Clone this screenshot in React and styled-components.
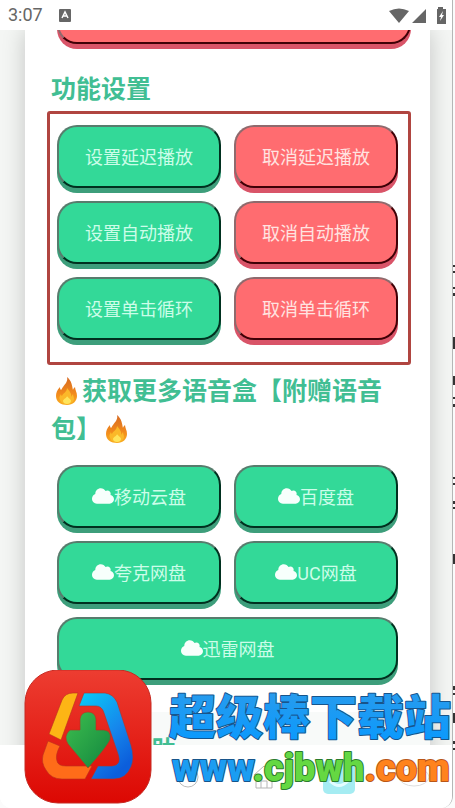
import React from 'react'
import styled, { createGlobalStyle } from 'styled-components';
import { FaCloud } from 'react-icons/fa';

const GlobalStyle = createGlobalStyle`
  * { box-sizing: border-box; }
  body {
    margin: 0;
    background: #fbfbfb;
    font-family: Roboto, "Noto Sans CJK SC", sans-serif;
  }
  h2, ul { margin: 0; padding: 0; }
`

const Page = styled.div`
  display: flex;
  height: 100vh;
  overflow: hidden;
  position: relative;
`

const Phone = styled.div`
  display: flex;
  flex-direction: column;
  flex: 1;
  min-width: 0;
  background: #fff;
  border-right: 1px solid #b5b7b6;
  border-radius: 0 0 12px 12px;
  overflow: hidden;
`

const Gutter = styled.div`
  flex: none;
  width: 2px;
  overflow: hidden;
  svg { display: block; }
`

const StatusBar = styled.header`
  display: flex;
  flex: none;
  align-items: center;
  height: 30px;
  padding: 0 5px 0 8px;
  color: #666;
  font-size: 18px;
  svg { display: block; }
`

const Clock = styled.span`
  margin-right: 16px;
  line-height: 30px;
`

const StatusIcons = styled.div`
  display: flex;
  align-items: center;
  margin-left: auto;
`

const Screen = styled.main`
  display: flex;
  flex-direction: column;
  flex: 1;
  min-height: 0;
  padding: 0 22px 0 25px;
  overflow: hidden;
  background: #f4f6f4;
`

const Card = styled.section`
  flex: 1 0 auto;
  padding: 0 19px 0 22px;
  background: #fff;
  box-shadow: 0 0 22px rgba(0, 0, 0, 0.2);
`

const Title = styled.h2`
  padding: 0 0 0 4px;
  color: #41be93;
  font-size: 25px;
  font-weight: 700;
  line-height: 38px;
  svg { vertical-align: -5px; margin: 0 4px; }
`

const Frame = styled.div`
  margin: 2px 0 8px;
  padding: 11px 10px 22px 7px;
  border: 3px solid #b04540;
  border-radius: 3px;
`

const Links = styled.div`
  padding: 16px 13px 0 10px;
`

const Grid = styled.div`
  display: grid;
  grid-template-columns: 1fr 1fr;
  gap: 13px;
`

const Button = styled.button`
  display: flex;
  flex: none;
  align-items: center;
  justify-content: center;
  grid-column: ${({ $wide }) => ($wide ? '1 / -1' : 'auto')};
  height: 63px;
  padding: 0 0 2px;
  border: 2px solid;
  border-color: ${({ $red }) => ($red ? '#8f6a6d #3f0006 #3f0006 #8f6a6d' : '#587c6d #00301f #00301f #587c6d')};
  border-radius: 20px;
  background: ${({ $red }) => ($red ? '#ff6c70' : '#33d998')};
  box-shadow: 0 5px 0 ${({ $red }) => ($red ? '#d95468' : '#3d9e7b')};
  color: ${({ $red }) => ($red ? '#ffe3e0' : '#ccfde9')};
  font-family: inherit;
  font-size: 18px;
  svg { color: #f7fffc; flex: none; }
`

const Cut = styled.div`
  display: flex;
  flex-direction: column;
  justify-content: flex-end;
  height: 14px;
  margin: 0 0 27px 10px;
`

const Help = styled(Title)`
  margin: 32px -19px 0 -22px;
  padding: 20px 0 0 26px;
  background: #f8faf9;
`

const NavBar = styled.nav`
  display: grid;
  grid-template-columns: repeat(6, 1fr);
  flex: none;
  place-items: center;
  height: 63px;
  background: #fff;
`

const NavButton = styled.button`
  display: flex;
  padding: 0;
  border: 0;
  background: none;
`

const Watermark = styled.aside`
  position: absolute;
  left: 24px;
  right: 0;
  bottom: 4px;
  display: flex;
  align-items: flex-start;
  svg { flex: none; display: block; }
`

const Brand = styled.svg`
  margin-left: 16px;
  overflow: visible;
`

const Flame = () => (
  <svg width="23" height="28" viewBox="0 0 23 28" role="img" aria-label="🔥">
    <defs>
      <linearGradient id="flame" x1="0" y1="0" x2="0" y2="1">
        <stop offset="0" stopColor="#d66a23" />
        <stop offset=".6" stopColor="#f28a1c" />
        <stop offset="1" stopColor="#f9ae20" />
      </linearGradient>
    </defs>
    <path fill="url(#flame)" d="M12 0c1 4-1 6-4 10-1 1-1 2-2 3-1-1-1-2-1-3-3 3-4 6-4 9 0 6 5 9 11 9s10-4 10-9c0-4-2-6-2-9-1 1-2 2-2 3C17 9 17 4 12 0z" />
    <path fill="#fbb829" d="M12 11c0 4-4 5-5 8-1-1-1-1-1-2-2 3-2 4-1 6 1 3 4 4 7 4s7-2 7-5c0-2-1-3-1-5l-2 3c1-4-2-6-4-9z" />
    <path fill="#ffe45b" d="M12 19c0 2-4 3-4 5s2 3 4 3 4-1 4-3-3-3-4-5z" />
  </svg>
)

const Logo = () => (
  <svg width="128" height="134" viewBox="0 0 128 134" aria-hidden="true">
    <defs>
      <linearGradient id="red" x1="0" y1="0" x2="0" y2="1">
        <stop offset="0" stopColor="#ed3d31" />
        <stop offset="1" stopColor="#dc0803" />
      </linearGradient>
      <linearGradient id="sky" x1="0" y1="0" x2=".6" y2="1">
        <stop offset="0" stopColor="#08cdf7" />
        <stop offset=".6" stopColor="#1687ec" />
        <stop offset="1" stopColor="#0c5edb" />
      </linearGradient>
      <linearGradient id="leaf" x1="0" y1="0" x2="1" y2="1">
        <stop offset=".2" stopColor="#35b34b" />
        <stop offset="1" stopColor="#12863f" />
      </linearGradient>
    </defs>
    <rect x="1" y="0" width="126" height="133" rx="33" fill="url(#red)" stroke="#c62a22" />
    <g stroke="#b8301f" strokeWidth=".6">
      <path fill="#fdb515" d="M54 23H49Q41 23 38 30L25 64 37 70z" />
      <path fill="#ff6c19" d="M24 71L36 76Q31 85 33 91 34 96 42 96H68L61 109H38Q27 109 22 100 17 93 19 85z" />
      <path fill="url(#sky)" d="M60 23H81Q89 24 93 32L107 75Q111 88 107 97 102 109 90 109H67L74 96H88Q98 95 94 84L80 43Q78 36 72 36H55z" />
      <path fill="url(#leaf)" d="M56 49Q57 42 64 42T72 49V60H80Q88 61 86 70 82 78 64 98L44 74Q39 66 46 60H56z" />
    </g>
  </svg>
)

const settings = ['延迟播放', '自动播放', '单击循环']
const disks = ['移动云盘', '百度盘', '夸克网盘', 'UC网盘', '迅雷网盘']

export default function App() {
  return (
    <Page>
      <GlobalStyle />
      <Phone>
        <StatusBar>
          <Clock>3:07</Clock>
          <svg width="12" height="13" viewBox="0 0 12 13">
            <rect width="12" height="13" rx="1" fill="#666" />
            <path d="M3 9L6 3l3 6M4 7h4" fill="none" stroke="#fff" strokeWidth="1.5" />
          </svg>
          <StatusIcons>
            <svg width="58" height="17" viewBox="0 0 58 17" fill="#666">
              <path d="M0 4Q10-1 20 4L10 16zM23 16L37 2v14zM49 0h5v2h3v15h-9V2h1z" />
              <path fill="#fff" d="M54 4l-4 6h2l-1 4 4-6h-2z" />
            </svg>
          </StatusIcons>
        </StatusBar>
        <Screen>
          <Card>
            <Cut>
              <Button $red aria-label="取消" />
            </Cut>
            <Title>功能设置</Title>
            <Frame>
              <Grid>
                {settings.map((name) => (
                  <React.Fragment key={name}>
                    <Button>设置{name}</Button>
                    <Button $red>取消{name}</Button>
                  </React.Fragment>
                ))}
              </Grid>
            </Frame>
            <Title><Flame />获取更多语音盒【附赠语音包】<Flame /></Title>
            <Links>
              <Grid>
                {disks.map((name) => (
                  <Button key={name} $wide={name === '迅雷网盘'}>
                    <FaCloud size={22} />{name}
                  </Button>
                ))}
              </Grid>
            </Links>
            <Help>使用与帮助</Help>
          </Card>
        </Screen>
        <NavBar>
          <NavButton aria-label="菜单">
            <svg width="22" height="22" viewBox="0 0 22 22" fill="none" stroke="#bbb">
              <path d="M2 5h18M2 11h18M2 17h18" />
            </svg>
          </NavButton>
          <NavButton aria-label="搜索">
            <svg width="22" height="22" viewBox="0 0 22 22" fill="none" stroke="#bbb">
              <path d="M15 15l6 6M1 9a8 8 0 1 0 16 0a8 8 0 1 0-16 0" />
            </svg>
          </NavButton>
          <NavButton aria-label="浏览">
            <svg width="22" height="22" viewBox="0 0 22 22" fill="none" stroke="#bbb">
              <circle cx="11" cy="11" r="10" />
            </svg>
          </NavButton>
          <NavButton aria-label="主页">
            <svg width="22" height="24" viewBox="0 0 22 24" fill="none" stroke="#b5b5b5">
              <path d="M1 10L11 1l10 9M3 9v14h16V9M8 23v-7h6v7" />
            </svg>
          </NavButton>
          <NavButton aria-label="语音盒">
            <svg width="32" height="34" viewBox="0 0 32 34">
              <rect width="32" height="34" rx="5" fill="#a5ecf2" />
              <path d="M7 21q9 9 18 0" fill="none" stroke="#e3fcff" strokeWidth="3" />
            </svg>
          </NavButton>
          <NavButton aria-label="更多">
            <svg width="32" height="20" viewBox="0 0 32 20" fill="none" stroke="#ddd">
              <ellipse cx="16" cy="10" rx="15" ry="9" />
            </svg>
          </NavButton>
        </NavBar>
      </Phone>
      <Gutter>
        <svg width="2" height="808" viewBox="0 0 2 808" stroke="#333" strokeWidth="2" aria-hidden="true">
          <path d="M1 265v2m0 4v2m0 14v2m0 4v3m0 41v12m0 27v9m0 12v2m0 5v3m0 70v2m0 4v2m0 16v3m0 3v2m0 45v10m0 122v4m0 3v2m0 18v10m0 18v3m0 4v2" />
        </svg>
      </Gutter>
      <Watermark>
        <Logo />
        <Brand width="282" height="130" viewBox="0 0 282 130" fontFamily='"Noto Sans CJK SC", sans-serif' fontWeight="900">
          <defs>
            <linearGradient id="title" x1="0" y1="0" x2="0" y2="1">
              <stop offset="0" stopColor="#2f9ce9" />
              <stop offset="1" stopColor="#0799ff" />
            </linearGradient>
          </defs>
          <g strokeWidth="2" paintOrder="stroke" strokeLinejoin="round">
            <text x="1" y="64" fontSize="47" fill="url(#title)" stroke="#17558b">超级棒下载站</text>
            <text x="4" y="111" fontSize="38" fontFamily="Roboto, sans-serif">
              <tspan fill="#1b9df2" stroke="#17558b">www</tspan>
              <tspan fill="#65d842" stroke="#2b7c2d">.cjbwh</tspan>
              <tspan fill="#ff831d" stroke="#b95718">.com</tspan>
            </text>
          </g>
        </Brand>
      </Watermark>
    </Page>
  )
}
